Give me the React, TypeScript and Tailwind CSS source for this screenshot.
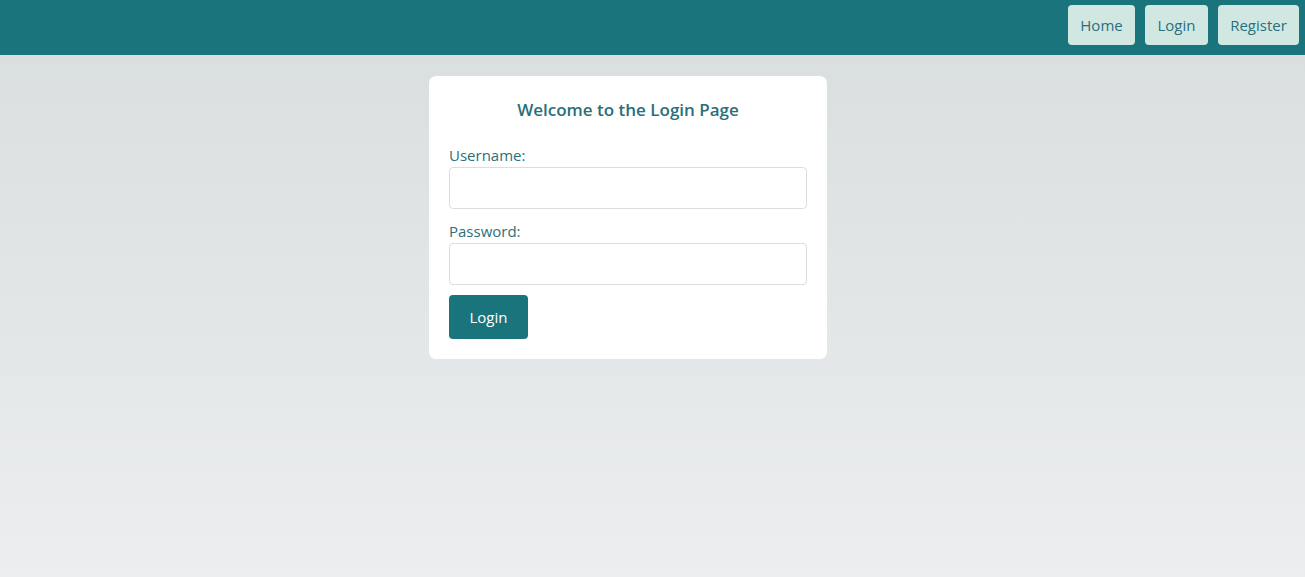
export default function App() {
  const links = [
    { label: 'Home', width: 'w-[67px]' },
    { label: 'Login', width: 'w-[63px]' },
    { label: 'Register', width: 'w-[81px]' },
  ];

  return (
    <div
      className="min-h-screen flex flex-col bg-gradient-to-b from-[#d8dddd] to-[#eceef0]"
      style={{ fontFamily: '"Open Sans", "Noto Sans", sans-serif' }}
    >
      <nav className="h-[55px] bg-[#1a747c] flex items-start justify-end gap-[10px] pt-[5px] pr-[6px]">
        {links.map((link) => (
          <button
            key={link.label}
            className={`${link.width} h-[40px] rounded-[4px] bg-[#d1e8e2] text-[#2a6f7a] text-[15px]`}
          >
            {link.label}
          </button>
        ))}
      </nav>

      <main className="flex justify-center pt-[21px] pr-[49px]">
        <div className="w-[398px] bg-white rounded-[7px] p-[20px]">
          <h2 className="text-center text-[17px] font-semibold text-[#2a6f7a] mb-[21px] leading-[28px]">
            Welcome to the Login Page
          </h2>
          <form className="flex flex-col">
            <label className="text-[15px] text-[#2a6f7a] leading-[20px] mb-[2px]">Username:</label>
            <input
              type="text"
              className="h-[42px] w-full border border-[#dddddd] rounded-[4px] mb-[12px] outline-none"
            />
            <label className="text-[15px] text-[#2a6f7a] leading-[20px] mb-[2px]">Password:</label>
            <input
              type="password"
              className="h-[42px] w-full border border-[#dddddd] rounded-[4px] mb-[10px] outline-none"
            />
            <button
              type="button"
              className="self-start w-[79px] h-[44px] rounded-[4px] bg-[#1a747c] text-white text-[15px]"
            >
              Login
            </button>
          </form>
        </div>
      </main>
    </div>
  );
}
